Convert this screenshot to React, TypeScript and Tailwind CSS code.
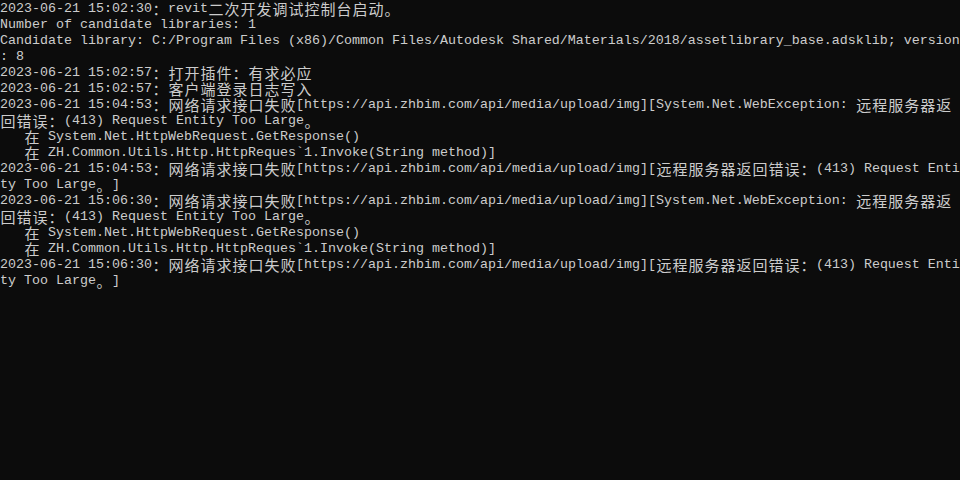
import React from "react";

const lines: string[] = [
  "2023-06-21 15:02:30：revit二次开发调试控制台启动。",
  "Number of candidate libraries: 1",
  "Candidate library: C:/Program Files (x86)/Common Files/Autodesk Shared/Materials/2018/assetlibrary_base.adsklib; version",
  ": 8",
  "2023-06-21 15:02:57：打开插件：有求必应",
  "2023-06-21 15:02:57：客户端登录日志写入",
  "2023-06-21 15:04:53：网络请求接口失败[https://api.zhbim.com/api/media/upload/img][System.Net.WebException: 远程服务器返",
  "回错误：(413) Request Entity Too Large。",
  "   在 System.Net.HttpWebRequest.GetResponse()",
  "   在 ZH.Common.Utils.Http.HttpReques`1.Invoke(String method)]",
  "2023-06-21 15:04:53：网络请求接口失败[https://api.zhbim.com/api/media/upload/img][远程服务器返回错误：(413) Request Enti",
  "ty Too Large。]",
  "2023-06-21 15:06:30：网络请求接口失败[https://api.zhbim.com/api/media/upload/img][System.Net.WebException: 远程服务器返",
  "回错误：(413) Request Entity Too Large。",
  "   在 System.Net.HttpWebRequest.GetResponse()",
  "   在 ZH.Common.Utils.Http.HttpReques`1.Invoke(String method)]",
  "2023-06-21 15:06:30：网络请求接口失败[https://api.zhbim.com/api/media/upload/img][远程服务器返回错误：(413) Request Enti",
  "ty Too Large。]",
];

// full-width characters take two console cells
const isWide = (ch: string) => {
  const c = ch.codePointAt(0) ?? 0;
  return (c >= 0x2e80 && c <= 0x9fff) || (c >= 0xff00 && c <= 0xff60) || (c >= 0x3000 && c <= 0x303f);
};

// split a line into runs of narrow text and single wide chars
const splitRuns = (text: string) => {
  const runs: { wide: boolean; text: string }[] = [];
  for (const ch of Array.from(text)) {
    const wide = isWide(ch);
    const last = runs[runs.length - 1];
    if (!wide && last && !last.wide) last.text += ch;
    else runs.push({ wide, text: ch });
  }
  return runs;
};

const ConsoleLine: React.FC<{ text: string }> = ({ text }) => (
  <div className="flex h-4 items-center whitespace-pre pt-px leading-4">
    {splitRuns(text).map((run, i) =>
      run.wide ? (
        <span
          key={i}
          className="inline-block w-4 text-center text-[15px] leading-4 font-['Noto_Sans_CJK_SC',sans-serif]"
        >
          {run.text}
        </span>
      ) : (
        <span key={i} className="text-[13.333px] leading-4 font-['Liberation_Mono',monospace]">
          {run.text}
        </span>
      )
    )}
  </div>
);

export default function App() {
  return (
    <div className="h-[480px] w-[960px] overflow-hidden bg-[#0c0c0c] text-[#cccccc]">
      {lines.map((line, i) => (
        <ConsoleLine key={i} text={line} />
      ))}
    </div>
  );
}
